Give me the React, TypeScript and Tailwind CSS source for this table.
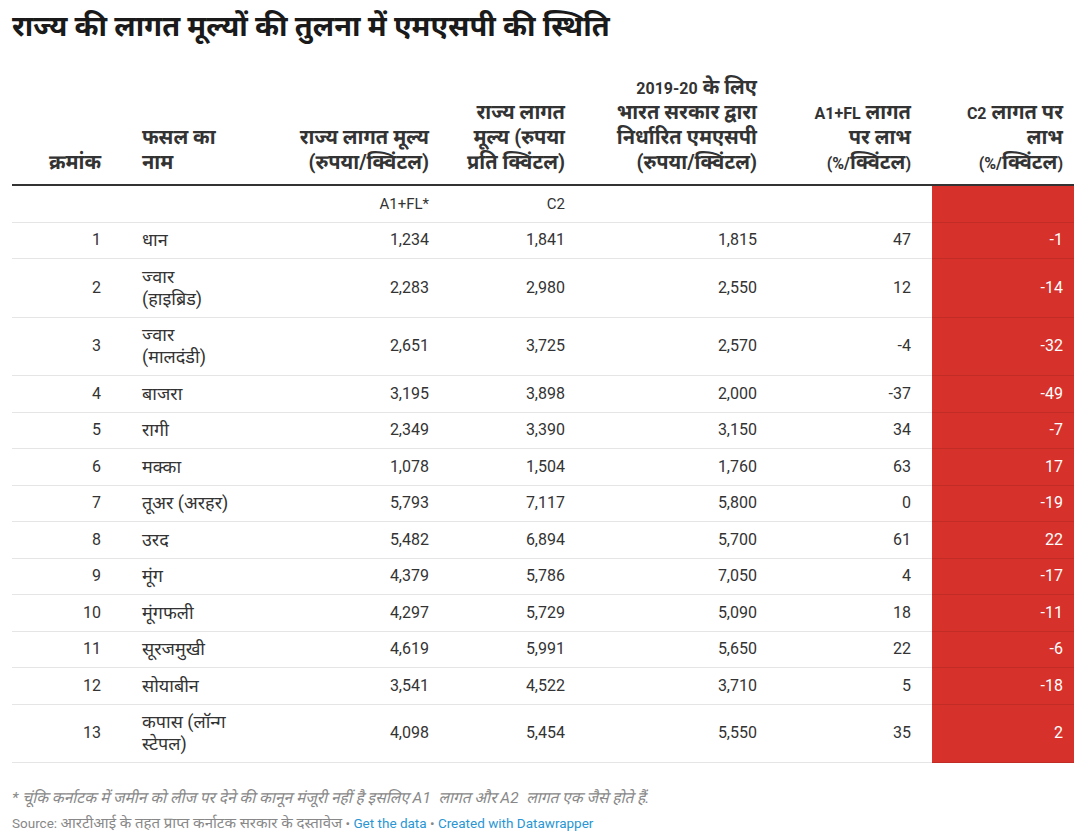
import React from 'react'

type Row = {
  n: number
  name: React.ReactNode
  a: string
  c2: string
  msp: string
  p1: string
  p2: string
}

// Devanagari falls back to a smaller face than the original, so Hindi runs in the body get their own size
const Hi = ({ children }: { children: React.ReactNode }) => (
  <span className="text-[18px] leading-[22px]">{children}</span>
)
// Latin runs inside the (20px) header
const Lt = ({ children }: { children: React.ReactNode }) => (
  <span className="text-[16px] leading-none">{children}</span>
)

const rows: Row[] = [
  { n: 1, name: 'धान', a: '1,234', c2: '1,841', msp: '1,815', p1: '47', p2: '-1' },
  { n: 2, name: <>ज्वार<br />(हाइब्रिड)</>, a: '2,283', c2: '2,980', msp: '2,550', p1: '12', p2: '-14' },
  { n: 3, name: <>ज्वार<br />(मालदंडी)</>, a: '2,651', c2: '3,725', msp: '2,570', p1: '-4', p2: '-32' },
  { n: 4, name: 'बाजरा', a: '3,195', c2: '3,898', msp: '2,000', p1: '-37', p2: '-49' },
  { n: 5, name: 'रागी', a: '2,349', c2: '3,390', msp: '3,150', p1: '34', p2: '-7' },
  { n: 6, name: 'मक्का', a: '1,078', c2: '1,504', msp: '1,760', p1: '63', p2: '17' },
  { n: 7, name: 'तूअर (अरहर)', a: '5,793', c2: '7,117', msp: '5,800', p1: '0', p2: '-19' },
  { n: 8, name: 'उरद', a: '5,482', c2: '6,894', msp: '5,700', p1: '61', p2: '22' },
  { n: 9, name: 'मूंग', a: '4,379', c2: '5,786', msp: '7,050', p1: '4', p2: '-17' },
  { n: 10, name: 'मूंगफली', a: '4,297', c2: '5,729', msp: '5,090', p1: '18', p2: '-11' },
  { n: 11, name: 'सूरजमुखी', a: '4,619', c2: '5,991', msp: '5,650', p1: '22', p2: '-6' },
  { n: 12, name: 'सोयाबीन', a: '3,541', c2: '4,522', msp: '3,710', p1: '5', p2: '-18' },
  { n: 13, name: <>कपास (लॉन्ग<br />स्टेपल)</>, a: '4,098', c2: '5,454', msp: '5,550', p1: '35', p2: '2' },
]

const grid = 'grid grid-cols-[122px_136px_167px_136px_192px_167px_142px]'
const cell = 'flex items-center border-b border-black/10 py-[6.75px] leading-[22px]'

export default function App() {
  return (
    <div className="w-[1077px] h-[840px] bg-white text-[#333] font-['Roboto','Noto_Sans_Devanagari',sans-serif] px-3 pt-[6px] overflow-hidden">
      <h1 className="text-[29px] leading-[40px] font-bold text-[#1a1a1a]">
        राज्य की लागत मूल्यों की तुलना में एमएसपी की स्थिति
      </h1>

      <div className="mt-[29px] w-[1062px]">
        {/* header */}
        <div className={`${grid} items-end border-b-2 border-[#333] text-[20px] leading-[25px] font-bold pb-[9px]`}>
          <div className="text-right pr-[33px]">क्रमांक</div>
          <div className="pl-2">फसल का<br />नाम</div>
          <div className="text-right pr-2">राज्य लागत मूल्य<br />(रुपया/क्विंटल)</div>
          <div className="text-right pr-2">राज्य लागत<br />मूल्य (रुपया<br />प्रति क्विंटल)</div>
          <div className="text-right pr-2">
            <Lt>2019-20</Lt> के लिए<br />भारत सरकार द्वारा<br />निर्धारित एमएसपी<br />(रुपया/क्विंटल)
          </div>
          <div className="text-right pr-[21px]">
            <Lt>A1+FL</Lt> लागत<br />पर लाभ<br /><Lt>(%/</Lt>क्विंटल<Lt>)</Lt>
          </div>
          <div className="text-right pr-[11px]">
            <Lt>C2</Lt> लागत पर<br />लाभ<br /><Lt>(%/</Lt>क्विंटल<Lt>)</Lt>
          </div>
        </div>

        {/* sub header */}
        <div className={`${grid} text-[15px]`}>
          <div className={`${cell} py-[5.5px]`} />
          <div className={`${cell} py-[5.5px]`} />
          <div className={`${cell} py-[5.5px] justify-end pr-2`}>A1+FL*</div>
          <div className={`${cell} py-[5.5px] justify-end pr-2`}>C2</div>
          <div className={`${cell} py-[5.5px]`} />
          <div className={`${cell} py-[5.5px]`} />
          <div className={`${cell} py-[5.5px] bg-[#d7312b]`} />
        </div>

        {/* rows */}
        {rows.map((r) => (
          <div key={r.n} className={`${grid} text-[16px]`}>
            <div className={`${cell} justify-end pr-[33px]`}>{r.n}</div>
            <div className={`${cell} pl-2`}><Hi>{r.name}</Hi></div>
            <div className={`${cell} justify-end pr-2`}>{r.a}</div>
            <div className={`${cell} justify-end pr-2`}>{r.c2}</div>
            <div className={`${cell} justify-end pr-2`}>{r.msp}</div>
            <div className={`${cell} justify-end pr-[21px]`}>{r.p1}</div>
            <div className={`${cell} justify-end pr-[11px] bg-[#d7312b] text-white`}>{r.p2}</div>
          </div>
        ))}
      </div>

      <p className="mt-[24px] text-[15.5px] italic text-[#888] leading-[22px]">
        * चूंकि कर्नाटक में जमीन को लीज पर देने की कानून मंजूरी नहीं है इसलिए A1&nbsp; लागत और A2&nbsp; लागत एक जैसे होते हैं.
      </p>
      <p className="mt-[4px] text-[13.5px] text-[#888] leading-[20px]">
        Source: <span className="text-[15px]">आरटीआई के तहत प्राप्त कर्नाटक सरकार के दस्तावेज</span> •{' '}
        <span className="text-[#2a96d3]">Get the data</span> •{' '}
        <span className="text-[#2a96d3]">Created with Datawrapper</span>
      </p>
    </div>
  )
}
